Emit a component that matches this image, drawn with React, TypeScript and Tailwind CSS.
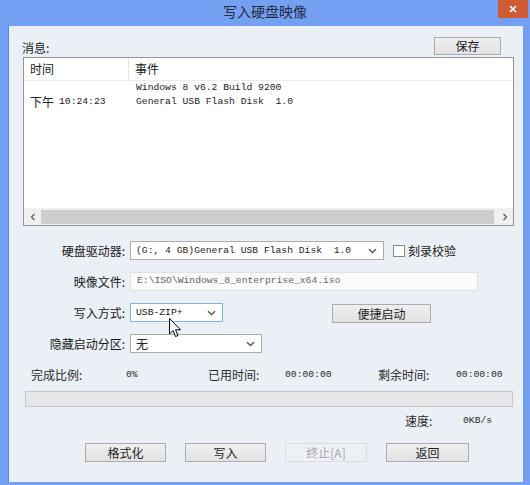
import React from "react";

const cjk = "font-['Noto_Sans_CJK_SC',sans-serif]";
const mono = "font-['Liberation_Mono',monospace]";

function Btn({ children, disabled, className = "" }: { children: React.ReactNode; disabled?: boolean; className?: string }) {
  return (
    <div
      className={`flex items-center justify-center border text-[12px] leading-none ${cjk} ${
        disabled
          ? "border-[#d9dde2] bg-[#eef1f4] text-[#a7a7a7]"
          : "border-[#acacac] bg-gradient-to-b from-[#efefef] to-[#e2e2e2] text-[#1e1e1e]"
      } ${className}`}
    >
      {children}
    </div>
  );
}

function Chevron() {
  return (
    <svg width="9" height="6" viewBox="0 0 9 6" className="shrink-0">
      <path d="M1 1.2 L4.5 4.6 L8 1.2" fill="none" stroke="#555" strokeWidth="1.4" />
    </svg>
  );
}

function Combo({ children, className = "", hover }: { children: React.ReactNode; className?: string; hover?: boolean }) {
  return (
    <div
      className={`flex h-[19px] items-center justify-between border bg-white pl-[5px] pr-[6px] ${
        hover ? "border-[#7eb4ea]" : "border-[#acacac]"
      } ${className}`}
    >
      <div className="whitespace-nowrap leading-[15px]">{children}</div>
      <Chevron />
    </div>
  );
}

function Label({ children }: { children: React.ReactNode }) {
  return <div className={`w-[116px] shrink-0 text-right text-[12px] leading-none text-[#1a1a1a] ${cjk}`}>{children}</div>;
}

export default function App() {
  return (
    <div className="relative flex h-[485px] w-[530px] flex-col overflow-hidden bg-[#74a0f3]">
      {/* title bar */}
      <div className="flex h-[26px] shrink-0 items-start">
        <div className={`flex-1 pl-[32px] pt-[4px] text-center text-[14px] leading-none text-[#1f2a3c] ${cjk}`}>写入硬盘映像</div>
        <div className="mr-[2px] flex h-[18px] w-[30px] shrink-0 items-center justify-center bg-[#cf5a36]">
          <svg width="8" height="8" viewBox="0 0 8 8">
            <path d="M1 1 L7 7 M7 1 L1 7" stroke="#ffffff" strokeWidth="1.6" />
          </svg>
        </div>
      </div>

      {/* client area */}
      <div className="mb-[3px] ml-[8px] mr-[7px] flex flex-1 flex-col border-l border-[#5d87e0] bg-[#eaf0f5]">
        <div className="mt-[11px] flex h-[18px] items-center pl-[13px] pr-[22px]">
          <div className={`mt-[4px] text-[12px] leading-none text-[#1a1a1a] ${cjk}`}>消息:</div>
          <Btn className="ml-auto h-[18px] w-[67px]">保存</Btn>
        </div>

        {/* message list */}
        <div className="ml-[14px] mt-[2px] flex h-[169px] w-[491px] flex-col border border-[#8e959e] bg-white">
          <div className={`flex h-[23px] shrink-0 items-center border-b border-[#ececec] text-[12px] leading-none text-[#1a1a1a] ${cjk}`}>
            <div className="flex h-full w-[105px] items-center border-r border-[#e6e6e6] pl-[6px]">时间</div>
            <div className="pl-[6px]">事件</div>
          </div>
          <div className="flex h-[14px] items-center">
            <div className="w-[105px]" />
            <div className={`whitespace-pre pl-[7px] text-[9.7px] leading-none text-[#222] ${mono}`}>Windows 8 v6.2 Build 9200</div>
          </div>
          <div className="flex h-[14px] items-center">
            <div className="flex w-[105px] items-center pl-[6px] text-[#222]">
              <span className={`text-[12px] leading-none ${cjk}`}>下午</span>
              <span className={`ml-[5px] text-[9.7px] leading-none ${mono}`}>10:24:23</span>
            </div>
            <div className={`whitespace-pre pl-[7px] text-[9.7px] leading-none text-[#222] ${mono}`}>General USB Flash Disk  1.0</div>
          </div>
          <div className="flex-1" />
          <div className="flex h-[17px] shrink-0 items-center bg-[#f0f0f0]">
            <div className="flex w-[17px] items-center justify-center">
              <svg width="6" height="8" viewBox="0 0 6 8">
                <path d="M4.5 1 L1.5 4 L4.5 7" fill="none" stroke="#606060" strokeWidth="1.4" />
              </svg>
            </div>
            <div className="flex h-full flex-1 items-center">
              <div className="h-[14px] w-[453px] bg-[#cdcdcd]" />
            </div>
            <div className="flex w-[17px] items-center justify-center">
              <svg width="6" height="8" viewBox="0 0 6 8">
                <path d="M1.5 1 L4.5 4 L1.5 7" fill="none" stroke="#606060" strokeWidth="1.4" />
              </svg>
            </div>
          </div>
        </div>

        {/* form */}
        <div className="mt-[15px] flex flex-col gap-[12px]">
          <div className="flex h-[19px] items-center">
            <Label>硬盘驱动器:</Label>
            <Combo className={`ml-[5px] w-[254px] text-[9.7px] text-[#222] ${mono}`}>
              <span className="whitespace-pre">(G:, 4 GB)General USB Flash Disk  1.0</span>
            </Combo>
            <div className="ml-[9px] h-[12px] w-[12px] border border-[#8a8a8a] bg-white" />
            <div className={`ml-[3px] text-[12px] leading-none text-[#1a1a1a] ${cjk}`}>刻录校验</div>
          </div>
          <div className="flex h-[19px] items-center">
            <Label>映像文件:</Label>
            <div className={`ml-[5px] flex h-[19px] w-[348px] items-center border border-[#dde2e7] bg-[#f8fafb] pl-[6px] text-[9.7px] text-[#666] ${mono}`}>
              E:\ISO\Windows_8_enterprise_x64.iso
            </div>
          </div>
          <div className="flex h-[19px] items-center">
            <Label>写入方式:</Label>
            <Combo hover className={`ml-[5px] w-[93px] text-[9.7px] text-[#222] ${mono}`}>USB-ZIP+</Combo>
            <Btn className="ml-[109px] mt-[2px] h-[19px] w-[99px]">便捷启动</Btn>
          </div>
          <div className="flex h-[19px] items-center">
            <Label>隐藏启动分区:</Label>
            <Combo className={`ml-[5px] w-[132px] text-[12px] text-[#222] ${cjk}`}>无</Combo>
          </div>
        </div>

        {/* stats */}
        <div className="mt-[15px] flex h-[14px] items-center pl-[22px] text-[#2a2a2a]">
          <div className={`w-[95px] text-[12px] leading-none ${cjk}`}>完成比例:</div>
          <div className={`w-[82px] text-[9.7px] leading-none ${mono}`}>0%</div>
          <div className={`w-[77px] text-[12px] leading-none ${cjk}`}>已用时间:</div>
          <div className={`w-[93px] text-[9.7px] leading-none ${mono}`}>00:00:00</div>
          <div className={`w-[78px] text-[12px] leading-none ${cjk}`}>剩余时间:</div>
          <div className={`text-[9.7px] leading-none ${mono}`}>00:00:00</div>
        </div>

        <div className="ml-[16px] mt-[9px] h-[16px] w-[488px] border border-[#c4c8cc] bg-[#e4e6e8]" />

        <div className="mt-[7px] flex h-[14px] items-center pl-[396px] text-[#2a2a2a]">
          <div className={`w-[58px] text-[12px] leading-none ${cjk}`}>速度:</div>
          <div className={`text-[9.7px] leading-none ${mono}`}>0KB/s</div>
        </div>

        <div className="mt-[15px] flex gap-[19px] pl-[76px]">
          <Btn className="h-[19px] w-[81px]">格式化</Btn>
          <Btn className="h-[19px] w-[81px]">写入</Btn>
          <Btn disabled className="h-[19px] w-[82px]">终止[A]</Btn>
          <Btn className="h-[19px] w-[83px]">返回</Btn>
        </div>
      </div>

      {/* mouse pointer */}
      <svg className="absolute left-[169px] top-[318px]" width="13" height="20" viewBox="0 0 13 20">
        <path d="M0.5 0.5 L0.5 16 L4 12.5 L6.5 18.5 L9 17.5 L6.5 11.8 L11.5 11.8 Z" fill="#fff" stroke="#000" strokeWidth="1" strokeLinejoin="round" />
      </svg>
    </div>
  );
}
